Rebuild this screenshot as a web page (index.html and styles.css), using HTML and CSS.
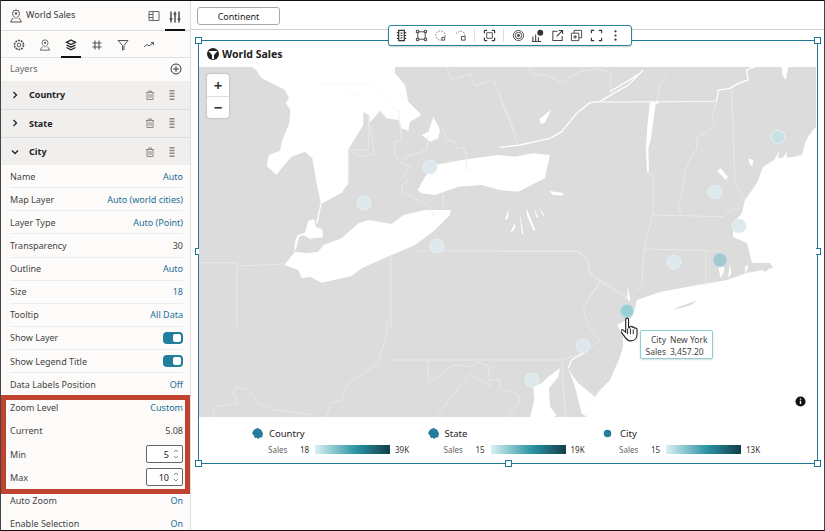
FILE: index.html
```html
<!DOCTYPE html>
<html lang="en">
<head>
    <meta charset="UTF-8">
    <title>World Sales</title>
    <link rel="stylesheet" href="styles.css">
</head>
<body>

    <svg class="defs" width="0" height="0">
        <symbol id="trash" viewBox="0 0 10 10">
            <path d="M1 2.500h8M3.500 2.500V1h3v1.500M2 2.500V9.500h6V2.500M4 4v4M6 4v4" fill="none" stroke="currentColor"/>
        </symbol>
        <symbol id="drag" viewBox="0 0 6 10">
            <path d="M0.500 0h5v1.500h-5zM0.500 2.800h5v1.500h-5zM0.500 5.600h5v1.500h-5zM0.500 8.400h5v1.500h-5z" fill="currentColor"/>
        </symbol>
        <symbol id="pin" viewBox="0 0 14 14">
            <path d="M7 1a3.500 3.500 0 0 1 3.500 3.500C10.500 7 7 9.500 7 9.500S3.500 7 3.500 4.500A3.500 3.500 0 0 1 7 1zM4 9l-2.500 4h11L10 9" fill="none" stroke="currentColor"/>
            <circle cx="7" cy="4.500" r="1.200" fill="currentColor"/>
        </symbol>
        <symbol id="spin" viewBox="0 0 6 12">
            <path d="M1 4l2-2 2 2M1 8l2 2 2-2" fill="none" stroke="currentColor" stroke-width=".9"/>
        </symbol>
    </svg>

    <aside class="sidebar">
        <div class="side-head">
            <svg class="ico ico-14"><use href="#pin"/></svg>
            <span class="side-title">World Sales</span>
            <div class="head-tabs">
                <svg class="ico ico-12" viewBox="0 0 12 12"><path d="M1 1.500h10v9H1zM5 1.500v9M1 4.500h4M1 7.500h4" fill="none" stroke="#666"/></svg>
                <span class="head-tab-on">
                    <svg class="ico ico-14" viewBox="0 0 14 14"><path d="M3 1.500v11M7 1.500v11M11 1.500v11M1.500 9h3M5.500 4h3M9.500 9h3" fill="none" stroke="#222" stroke-width="1.200"/></svg>
                </span>
            </div>
        </div>

        <div class="side-tabs">
            <span class="side-tab">
                <svg class="ico ico-12" viewBox="0 0 12 12"><circle cx="6" cy="6" r="4.500" fill="none" stroke="#555" stroke-width="1.600" stroke-dasharray="2 .8"/><circle cx="6" cy="6" r="1.800" fill="none" stroke="#555"/></svg>
            </span>
            <span class="side-tab"><svg class="ico ico-12"><use href="#pin"/></svg></span>
            <span class="side-tab side-tab-on">
                <svg class="ico ico-12" viewBox="0 0 12 12"><path d="M6 1l4.500 2.300L6 5.600 1.500 3.300zM1.500 6L6 8.200 10.500 6M1.500 8.500L6 10.800l4.500-2.300" fill="none" stroke="#222" stroke-width="1.300"/></svg>
            </span>
            <span class="side-tab">
                <svg class="ico ico-12" viewBox="0 0 12 12"><path d="M4 1.500v9M8 1.500v9M1.500 4h9M1.500 8h9" fill="none" stroke="#555" stroke-width="1.100"/></svg>
            </span>
            <span class="side-tab">
                <svg class="ico ico-12" viewBox="0 0 12 12"><path d="M1 1.500h10L7 6.500v4L5.500 11V6.500z" fill="none" stroke="#555"/></svg>
            </span>
            <span class="side-tab">
                <svg class="ico ico-12" viewBox="0 0 12 12"><path d="M1 8l3-2.500L6 7l4-3M8 3.500h2.500V6" fill="none" stroke="#555"/></svg>
            </span>
        </div>

        <div class="layers-row">
            <span>Layers</span>
            <svg class="ico ico-12" viewBox="0 0 12 12"><circle cx="6" cy="6" r="5" fill="none" stroke="#333"/><path d="M6 3.200v5.600M3.200 6h5.600" stroke="#333"/></svg>
        </div>

        <div class="acc">
            <svg class="chev" viewBox="0 0 8 8"><path d="M2.500 1l3 3-3 3" fill="none" stroke="#222" stroke-width="1.300"/></svg>
            <span class="acc-name">Country</span>
            <svg class="acc-trash"><use href="#trash"/></svg>
            <svg class="acc-drag"><use href="#drag"/></svg>
        </div>
        <div class="acc">
            <svg class="chev" viewBox="0 0 8 8"><path d="M2.500 1l3 3-3 3" fill="none" stroke="#222" stroke-width="1.300"/></svg>
            <span class="acc-name">State</span>
            <svg class="acc-trash"><use href="#trash"/></svg>
            <svg class="acc-drag"><use href="#drag"/></svg>
        </div>
        <div class="acc acc-open">
            <svg class="chev" viewBox="0 0 8 8"><path d="M1 2.500l3 3 3-3" fill="none" stroke="#222" stroke-width="1.300"/></svg>
            <span class="acc-name">City</span>
            <svg class="acc-trash"><use href="#trash"/></svg>
            <svg class="acc-drag"><use href="#drag"/></svg>
        </div>

        <div class="props">
            <div class="prop"><span>Name</span><span class="val-link">Auto</span></div>
            <div class="prop"><span>Map Layer</span><span class="val-link">Auto (world cities)</span></div>
            <div class="prop"><span>Layer Type</span><span class="val-link">Auto (Point)</span></div>
            <div class="prop"><span>Transparency</span><span>30</span></div>
            <div class="prop"><span>Outline</span><span class="val-link">Auto</span></div>
            <div class="prop"><span>Size</span><span class="val-link">18</span></div>
            <div class="prop"><span>Tooltip</span><span class="val-link">All Data</span></div>
            <div class="prop"><span>Show Layer</span><span class="toggle"></span></div>
            <div class="prop"><span>Show Legend Title</span><span class="toggle"></span></div>
            <div class="prop"><span>Data Labels Position</span><span class="val-link">Off</span></div>
            <div class="prop prop-plain"><span>Zoom Level</span><span class="val-link">Custom</span></div>
            <div class="prop prop-plain"><span>Current</span><span>5.08</span></div>
            <div class="prop prop-plain"><span>Min</span><span class="stepper">5<svg class="spin"><use href="#spin"/></svg></span></div>
            <div class="prop prop-plain"><span>Max</span><span class="stepper">10<svg class="spin"><use href="#spin"/></svg></span></div>
            <div class="prop prop-plain"><span>Auto Zoom</span><span class="val-link">On</span></div>
            <div class="prop prop-plain"><span>Enable Selection</span><span class="val-link">On</span></div>
        </div>

        <div class="callout"></div>
    </aside>

    <main class="main">
        <div class="filter-bar">
            <button class="filter-btn" type="button">Continent</button>
        </div>

        <section class="viz">
            <span class="handle h-tl"></span>
            <span class="handle h-tr"></span>
            <span class="handle h-ml"></span>
            <span class="handle h-mr"></span>
            <span class="handle h-bl"></span>
            <span class="handle h-bm"></span>
            <span class="handle h-br"></span>

            <div class="toolbar">
                <svg class="tool" viewBox="0 0 14 14"><path d="M4 1.500h6v11H4zM2 4h2M2 7h2M2 10h2M10 4h2M10 7h2M10 10h2M6 4.500h2M6 7h2M6 9.500h2" fill="none" stroke="#333" stroke-width="1.300"/></svg>
                <svg class="tool" viewBox="0 0 14 14"><path d="M3 3h8v8H3z" fill="none" stroke="#444"/><path d="M1.500 1.500h2.500v2.500H1.500zM10 1.500h2.500v2.500H10zM1.500 10h2.500v2.500H1.500zM10 10h2.500v2.500H10z" fill="#fff" stroke="#333"/></svg>
                <svg class="tool" viewBox="0 0 14 14"><circle cx="7" cy="7" r="5" fill="none" stroke="#666" stroke-dasharray="1.600 1.400"/><path d="M8.500 9h3v3h-3z" fill="#fff" stroke="#444"/></svg>
                <svg class="tool" viewBox="0 0 14 14"><path d="M2 5l5-3 4 2 1 4" fill="none" stroke="#777" stroke-dasharray="1.600 1.400"/><path d="M8 8h4v4H8z" fill="#fff" stroke="#444"/></svg>
                <span class="tool-sep"></span>
                <svg class="tool" viewBox="0 0 14 14"><path d="M4 4h6v6H4z" fill="none" stroke="#444"/><path d="M1.500 1.500h3M1.500 1.500v3M12.500 1.500h-3M12.500 1.500v3M1.500 12.500h3M1.500 12.500v-3M12.500 12.500h-3M12.500 12.500v-3" stroke="#333" stroke-width="1.300"/></svg>
                <span class="tool-sep"></span>
                <svg class="tool" viewBox="0 0 14 14"><circle cx="7" cy="7" r="5.500" fill="none" stroke="#444"/><circle cx="7" cy="7" r="3.500" fill="none" stroke="#444"/><circle cx="7" cy="7" r="1.500" fill="#444"/></svg>
                <svg class="tool" viewBox="0 0 14 14"><path d="M2 13V8M5 13V6M8 13V9M1 13.500h10" stroke="#444" stroke-width="1.200"/><circle cx="10" cy="4" r="3.200" fill="#333"/></svg>
                <svg class="tool" viewBox="0 0 14 14"><path d="M7 2.500H2v10h10V7.500" fill="none" stroke="#444" stroke-width="1.100"/><path d="M6 8l6-6M8.500 1.500h4v4" fill="none" stroke="#333" stroke-width="1.100"/></svg>
                <svg class="tool" viewBox="0 0 14 14"><path d="M4.500 1.500h8v8h-8z" fill="none" stroke="#444"/><path d="M1.500 4.500h8v8h-8z" fill="#fff" stroke="#444"/><path d="M5.500 6.500v4M3.500 8.500h4" stroke="#333"/></svg>
                <svg class="tool" viewBox="0 0 14 14"><path d="M1.500 4.500v-3h3M9.500 1.500h3v3M12.500 9.500v3h-3M4.500 12.500h-3v-3" fill="none" stroke="#333" stroke-width="1.200"/></svg>
                <svg class="tool" viewBox="0 0 14 14"><circle cx="7" cy="2.500" r="1.200" fill="#333"/><circle cx="7" cy="7" r="1.200" fill="#333"/><circle cx="7" cy="11.500" r="1.200" fill="#333"/></svg>
            </div>

            <div class="viz-title">
                <svg class="title-ico" viewBox="0 0 12 12"><circle cx="6" cy="6" r="6" fill="#222"/><path d="M1.500 3h9L7 7v4H5V7z" fill="#fff"/></svg>
                <span>World Sales</span>
            </div>

            <div class="map">
                <svg class="map-svg" viewBox="199 67 617 350" width="617" height="350">
                    <rect x="199" y="67" width="617" height="350" fill="#dcdcdc"/>

                    <!-- ocean, in page coordinates -->
                    <path class="water" d="M817 126L813 130 808 137 805 143 802 155 793 157 777 158 763 167 757 183 745 200 742 213 733 223 733 237 747 243 752 263 770 263 773 268 747 273 727 280 687 287 660 292 637 300 635 308 632 317 617 325 623 335 623 347 620 357 610 380 600 390 595 397 588 407 588 418 817 418Z"/>
                    <path class="land" d="M678 307L698 300 691 305 673 310ZM765 267L769 270 763 272Z"/>

                    <!-- lakes and borders west side -->
                    <g transform="translate(195 60) scale(.3333)">
                        <path class="water" d="M170 20L185 32 200 55 235 72 270 90 282 115 272 128 286 150 283 190 262 240 255 272 222 285 215 318 245 345 262 322 290 290 330 275 352 295 365 370 378 432 440 398 460 370 460 268 505 195 505 155 525 168 522 190 545 165 555 152 575 175 610 180 620 205 640 212 645 185 680 165 665 150 640 125 630 75 600 40 600 20Z"/>
                        <path class="water" d="M340 482L358 478 362 500 382 508 384 532 345 536 325 525 312 530 305 560 298 578 300 545 308 525 330 518Z"/>
                        <path class="water" d="M268 615L300 575 335 580 370 575 385 555 440 535 490 490 520 480 590 492 625 465 690 450 768 450 765 465 720 510 660 555 590 585 500 625 470 648 380 668 345 650 320 655 310 630Z"/>
                        <path class="water" d="M668 390L690 350 720 315 800 300 910 285 960 290 1015 280 1065 285 1055 330 1050 355 1010 375 970 395 915 390 860 375 790 380 720 405 680 400Z"/>
                        <path class="water" d="M680 225L700 215 715 170 735 210 730 235 705 245Z"/>
                        <path class="water" d="M930 478L940 450 940 472 934 480ZM945 520L960 490 960 505Z"/>
                        <path class="river" d="M378 432L365 490"/>
                        <path class="border-faint" d="M370 72H530L610 160M450 70L470 100 510 112"/>
                        <path class="border" d="M755 20L770 60 825 40 840 78 895 58 960 215M520 165V270L460 268 495 290 538 280 520 170M610 150L620 240 600 245 598 285 618 310 645 320 625 350 640 365 620 375 620 395 700 435 720 470M620 310L635 290 695 270 700 225M740 200L755 240 780 245 785 265 805 262 815 290 815 330M745 395V440"/>
                        <path class="border" d="M12 608H125M125 618L270 612M125 608V798M588 585V805"/>
                    </g>

                    <!-- lakes and borders east side -->
                    <g transform="translate(500 60) scale(.3333)">
                        <path class="river" d="M0 262L60 255 150 235 185 215 230 160 270 128 300 125 340 100 385 75 430 30M330 95L380 65 420 40"/>
                        <path class="river" d="M650 124L655 90 690 85 715 70 745 60 740 30 765 20"/>
                        <path class="water" d="M118 178L154 148 136 186 124 192ZM148 393L190 399 188 407 158 404ZM18 478L26 450 24 470ZM32 518L46 485 42 510ZM58 450L70 520 66 524ZM80 445L106 510 102 514 80 465ZM102 445L114 470 110 474ZM116 442L134 466 130 468Z"/>
                        <path class="water" d="M450 122L468 125 462 170 452 240 445 265 447 335 441 335 438 265 442 200ZM468 120L480 125 468 135ZM652 333L662 325 684 350 678 360ZM745 295L760 300 758 318 750 314ZM845 20H865L857 60 847 45ZM825 295L837 275 832 305ZM850 290L862 275 856 305Z"/>
                        <path class="border" d="M85 20L100 45H140L185 68 240 35 290 25 335 40 330 80 350 95M0 115L40 215 55 255M500 45L480 75 470 125M650 124L635 175 645 190 625 215 590 232V265L555 330 545 400 535 440 545 465M695 85L705 370 725 400 735 420M458 465L670 470 690 450 720 445M440 340L460 345 458 465 433 565 425 680 410 690M433 567L665 573M617 573V680M0 574H235L265 600V630L300 660 390 715M300 668L260 720"/>
                        <path class="border border-wide" d="M305 126L650 124"/>
                        <path class="water" d="M384 680L390 720 382 715Z"/>
                        <path class="water" d="M655 625L670 605 673 630 663 655ZM690 610L694 640 684 655ZM735 620L745 615 737 645Z"/>
                    </g>

                    <!-- lakes and borders south side -->
                    <g transform="translate(195 240) scale(.3333)">
                        <path class="border" d="M670 33H1145L1175 60 1185 100 1215 125 1165 205 1180 260 1215 300 1165 340 1100 360H588M1215 125L1300 180M700 360V430L775 375 830 380 845 365 880 378 885 440 825 400 725 530M125 440L115 460 130 490 60 500 52 533M125 440L160 450 190 490 240 510 290 515 350 525M585 232L575 240V280L550 370 490 410 460 430 440 480 405 490 395 533M885 420H915V445L970 465 975 480 955 510 935 533M1100 360L1112 533"/>
                        <path class="water" d="M1005 533L1018 480 1015 440 1040 430 1060 410 1095 385 1090 410 1062 445 1065 500 1085 525 1075 533Z"/>
                        <path class="water" d="M1120 385L1135 410 1150 430 1200 470 1180 500 1178 533 1160 520 1140 440ZM1298 140L1305 180 1300 185Z"/>
                        <path class="river" d="M1165 340L1130 360 1120 385"/>
                    </g>

                    <!-- city markers -->
                    <circle class="dot" cx="364" cy="203" r="7"/>
                    <circle class="dot" cx="430" cy="167" r="7"/>
                    <circle class="dot" cx="437" cy="246" r="7"/>
                    <circle class="dot dot-mid" cx="778" cy="137" r="7"/>
                    <circle class="dot" cx="715" cy="192" r="7"/>
                    <circle class="dot" cx="739" cy="226" r="7"/>
                    <circle class="dot" cx="674" cy="262" r="7"/>
                    <circle class="dot dot-dark" cx="720" cy="260" r="7"/>
                    <circle class="dot" cx="583" cy="346" r="7"/>
                    <circle class="dot" cx="532" cy="380" r="7"/>
                    <circle class="dot dot-hover" cx="627" cy="311" r="6.500"/>
                </svg>

                <div class="zoom-ctl">
                    <span class="zoom-btn">+</span>
                    <span class="zoom-btn">&minus;</span>
                </div>

                <svg class="info" viewBox="0 0 12 12"><circle cx="6" cy="6" r="5.500" fill="#111"/><path d="M6 5.200v3.500M6 2.800v1.300" stroke="#fff" stroke-width="1.500"/></svg>

                <div class="tip">
                    <span class="tip-key">City</span><span>New York</span>
                    <span class="tip-key">Sales</span><span>3,457.20</span>
                </div>

                <svg class="hand" viewBox="0 0 18 26">
                    <path d="M6 2.500c0-2 3-2 3 0V11l1 0c.2-2 3-2 3 .2 .4-1.500 2.800-1 2.800.6 .8-.8 2.200-.2 2.200 1.200v5c0 4-2.500 7-6.500 7-3.500 0-5-1.500-7-5L1 15.500c-1-2 1.500-3 2.800-1.500L6 16z" transform="translate(-1 0)" fill="#fff" stroke="#222" stroke-width="1.200"/>
                    <path d="M8 12v6M11 12v6M14 13v5" stroke="#222" transform="translate(-1 0)"/>
                </svg>
            </div>

            <div class="legend">
                <div class="legend-col">
                    <div class="legend-name">
                        <svg class="legend-shape" viewBox="0 0 12 12"><path d="M2 2l4-2 4 2 2 4-1 4-3 .5-1 1.500-2-1.500-2 .5-1-3-2-2z"/></svg>
                        <span>Country</span>
                    </div>
                    <div class="legend-scale">
                        <span class="scale-key">Sales</span><span class="scale-min">18</span><span class="ramp"></span><span>39K</span>
                    </div>
                </div>
                <div class="legend-col">
                    <div class="legend-name">
                        <svg class="legend-shape" viewBox="0 0 12 12"><path d="M2 2l4-2 4 2 2 4-1 4-3 .5-1 1.500-2-1.500-2 .5-1-3-2-2z"/></svg>
                        <span>State</span>
                    </div>
                    <div class="legend-scale">
                        <span class="scale-key">Sales</span><span class="scale-min">15</span><span class="ramp"></span><span>19K</span>
                    </div>
                </div>
                <div class="legend-col">
                    <div class="legend-name">
                        <svg class="legend-shape legend-dot" viewBox="0 0 12 12"><circle cx="6" cy="6" r="5"/></svg>
                        <span>City</span>
                    </div>
                    <div class="legend-scale">
                        <span class="scale-key">Sales</span><span class="scale-min">15</span><span class="ramp"></span><span>13K</span>
                    </div>
                </div>
            </div>
        </section>
    </main>

</body>
</html>
```

FILE: styles.css
```css
* {
    box-sizing: border-box;
}

html,
body {
    margin: 0;
    padding: 0;
}

body {
    width: 825px;
    height: 531px;
    overflow: hidden;
    display: flex;
    background-color: #ffffff;
    border-top: 1px solid #111111;
    border-bottom: 1px solid #111111;
    border-left: 1px solid #444444;
    border-right: 1px solid #444444;
    font-family: "Noto Sans", "Open Sans", sans-serif;
    font-size: 9px;
    color: #333333;
}

.defs {
    position: absolute;
}

.ico {
    display: block;
    color: #555555;
}

.ico-14 {
    width: 14px;
    height: 14px;
}

.ico-12 {
    width: 12px;
    height: 12px;
}

/* Left properties panel */
.sidebar {
    position: relative;
    flex: none;
    width: 190px;
    overflow: hidden;
    background-color: #fcfbfa;
    border-right: 1px solid #dddddd;
}

.side-head {
    display: flex;
    align-items: center;
    height: 30px;
    padding: 0 5px 0 8px;
    border-bottom: 1px solid #dedede;
}

.side-title {
    margin-left: 3px;
    margin-top: -3px;
    color: #333333;
}

.head-tabs {
    display: flex;
    align-items: center;
    gap: 5px;
    margin-left: auto;
}

.head-tab-on {
    display: flex;
    justify-content: center;
    width: 20px;
    height: 30px;
    padding-top: 9px;
    border-bottom: 2px solid #111111;
}

.side-tabs {
    display: flex;
    height: 27px;
    padding-left: 5px;
    border-bottom: 1px solid #e2e2e2;
}

.side-tab {
    display: flex;
    justify-content: center;
    padding-top: 8px;
    width: 26px;
    height: 27px;
}

.side-tab-on {
    width: 20px;
    margin: 0 3px;
    border-bottom: 2px solid #111111;
}

.layers-row {
    display: flex;
    align-items: center;
    justify-content: space-between;
    height: 23px;
    padding: 0 8px 2px 9px;
    color: #666666;
}

.acc {
    display: flex;
    align-items: center;
    height: 28.500px;
    padding: 0 10px;
    background-color: #f0efee;
    border-bottom: 1px solid #dddddd;
}

.acc-open {
    height: 27px;
    border-bottom: none;
}

.chev {
    width: 8px;
    height: 8px;
    flex: none;
}

.acc-name {
    margin-left: 10px;
    font-weight: 700;
    color: #222222;
}

.acc-trash {
    width: 10px;
    height: 10px;
    margin-left: auto;
    color: #8f8a87;
}

.acc-drag {
    width: 6px;
    height: 10px;
    margin-left: 14px;
    margin-right: 5px;
    color: #8f8a87;
}

.props {
    padding: 0 7px 0 9px;
}

.prop {
    display: flex;
    align-items: center;
    justify-content: space-between;
    height: 23.130px;
    margin-right: 0;
    border-bottom: 1px solid #ececec;
    color: #444444;
}

.prop-plain {
    border-bottom: none;
}

.val-link {
    color: #1b6f94;
}

.toggle {
    position: relative;
    width: 20px;
    height: 12px;
    border-radius: 4px;
    background-color: #1f7f9c;
}

.toggle::after {
    content: "";
    position: absolute;
    top: 2px;
    right: 2px;
    width: 8px;
    height: 8px;
    border-radius: 2px;
    background-color: #ffffff;
}

.stepper {
    display: flex;
    align-items: center;
    justify-content: flex-end;
    width: 37px;
    height: 18px;
    padding-right: 1px;
    border: 1px solid #666666;
    border-radius: 2px;
    background-color: #ffffff;
    color: #222222;
}

.spin {
    width: 6px;
    height: 12px;
    margin-left: 4px;
    margin-right: 2px;
    color: #777777;
}

/* Red annotation box over the zoom rows */
.callout {
    position: absolute;
    left: 0;
    top: 394px;
    width: 189px;
    height: 99px;
    border: 5px solid #c0432f;
    pointer-events: none;
}

/* Main canvas */
.main {
    flex: 1;
    min-width: 0;
}

.filter-bar {
    height: 29px;
    padding: 6px 6px 0;
    border-bottom: 1px solid #d0d0d0;
}

.filter-btn {
    display: block;
    width: 83px;
    height: 18px;
    padding: 0;
    border: 1px solid #a8a8a8;
    border-radius: 3px;
    background-color: #ffffff;
    font-family: inherit;
    font-size: 9px;
    color: #222222;
}

.viz {
    position: relative;
    width: 620px;
    height: 424px;
    margin: 10px 0 0 7px;
    border: 1px solid #1f7896;
}

.handle {
    position: absolute;
    width: 7px;
    height: 7px;
    background-color: #ffffff;
    border: 1px solid #1f7896;
}

.h-tl { left: -4px; top: -4px; }
.h-tr { right: -4px; top: -4px; }
.h-ml { left: -4px; top: 207px; }
.h-mr { right: -4px; top: 207px; }
.h-bl { left: -4px; bottom: -4px; }
.h-bm { left: 306px; bottom: -4px; }
.h-br { right: -4px; bottom: -4px; }

.toolbar {
    position: absolute;
    left: 189px;
    top: -16px;
    display: flex;
    align-items: center;
    gap: 6.500px;
    width: 244px;
    height: 21px;
    padding: 0 6px;
    border: 1px solid #2a83a0;
    border-radius: 3px;
    background-color: #ffffff;
    box-shadow: 0 1px 2px rgba(0, 0, 0, 0.2);
}

.tool {
    flex: none;
    width: 13px;
    height: 13px;
}

.tool-sep {
    flex: none;
    width: 1px;
    height: 13px;
    margin: 0 1px;
    background-color: #dddddd;
}

.viz-title {
    display: flex;
    align-items: center;
    gap: 3px;
    height: 26px;
    padding: 0 0 0 8px;
    font-size: 10.500px;
    font-weight: 700;
    color: #222222;
}

.title-ico {
    width: 12px;
    height: 12px;
}

.map {
    position: relative;
    height: 350px;
}

.map-svg {
    display: block;
}

.water {
    fill: #ffffff;
    stroke: none;
}

.land {
    fill: #dcdcdc;
}

.river {
    fill: none;
    stroke: #ffffff;
    stroke-width: 4;
}

.border {
    fill: none;
    stroke: #ebebeb;
    stroke-width: 2.500;
}

.border-wide {
    stroke: #f4f4f4;
    stroke-width: 4;
}

.border-faint {
    fill: none;
    stroke: #f6f6f6;
    stroke-width: 2;
}

.dot {
    fill: #dde9ec;
    stroke: #e8f0f2;
}

.dot-mid {
    fill: #c9e0e4;
}

.dot-dark {
    fill: #a2c9cf;
    stroke: #c4dee2;
}

.dot-hover {
    fill: #99d0d6;
    stroke: #b9dfe3;
}

.zoom-ctl {
    position: absolute;
    left: 8px;
    top: 7px;
    display: flex;
    flex-direction: column;
    width: 22px;
    border-radius: 3px;
    background-color: #ffffff;
    box-shadow: 0 0 2px rgba(0, 0, 0, 0.35);
}

.zoom-btn {
    display: flex;
    align-items: center;
    justify-content: center;
    height: 22px;
    font-size: 15px;
    font-weight: 700;
    line-height: 1;
    color: #333333;
}

.zoom-btn + .zoom-btn {
    border-top: 1px solid #dddddd;
}

.info {
    position: absolute;
    right: 11px;
    top: 329px;
    width: 11px;
    height: 11px;
}

.tip {
    position: absolute;
    left: 441px;
    top: 263px;
    display: grid;
    grid-template-columns: auto auto;
    justify-content: center;
    column-gap: 4px;
    width: 73px;
    height: 29px;
    padding-top: 3px;
    border: 1px solid #8ecfd5;
    border-radius: 2px;
    background-color: #ffffff;
    box-shadow: 0 1px 2px rgba(0, 0, 0, 0.15);
    font-size: 8.500px;
    line-height: 11px;
    color: #444444;
}

.tip-key {
    text-align: right;
}

.hand {
    position: absolute;
    left: 422px;
    top: 250px;
    width: 17px;
    height: 25px;
}

.legend {
    display: flex;
    height: 46px;
    padding: 9px 0 0 51px;
}

.legend-col {
    flex: none;
    width: 175.500px;
}

.legend-name {
    display: flex;
    align-items: center;
    height: 14px;
    padding-left: 2px;
    font-size: 9.500px;
    color: #222222;
}

.legend-shape {
    flex: none;
    width: 11px;
    height: 11px;
    margin-right: 6px;
    fill: #257c9b;
}

.legend-dot {
    width: 9px;
    height: 9px;
    margin-right: 8px;
}

.legend-scale {
    display: flex;
    align-items: center;
    height: 16px;
    margin-top: 1px;
    margin-left: 18px;
    font-size: 8px;
    color: #333333;
}

.scale-key {
    width: 32px;
    color: #666666;
}

.scale-min {
    width: 15px;
}

.ramp {
    width: 75px;
    height: 9px;
    margin-right: 5px;
    background-image: linear-gradient(to right, #d8f0f3, #2a93a3 55%, #123f48);
}
```
